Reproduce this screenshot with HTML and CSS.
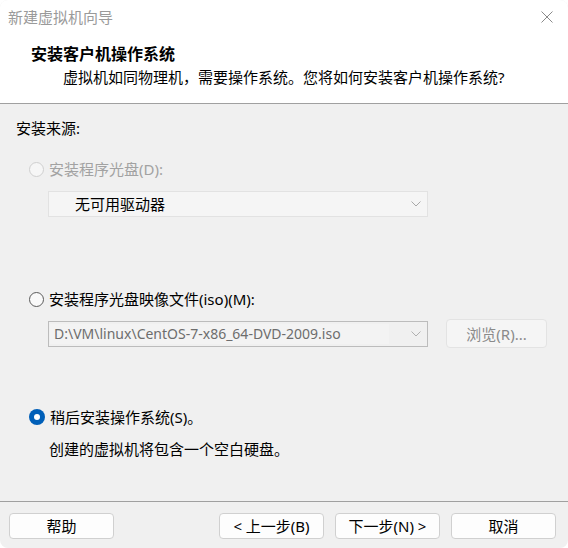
FILE: index.html
```html
<!DOCTYPE html>
<html lang="zh-CN">
<head>
<meta charset="utf-8">
<title>新建虚拟机向导</title>
<link rel="stylesheet" href="styles.css">
</head>
<body>
<div class="window">
  <div class="top">
    <div class="titlebar">
      <span class="title">新建虚拟机向导</span>
      <svg class="close" width="12" height="12" viewBox="0 0 12 12"><path d="M0.5 0.5 L11.5 11.5 M11.5 0.5 L0.5 11.5" stroke="#8a8a8a" stroke-width="1" fill="none"/></svg>
    </div>
    <div class="header">
      <div class="heading">安装客户机操作系统</div>
      <div class="subtitle">虚拟机如同物理机，需要操作系统。您将如何安装客户机操作系统?</div>
    </div>
  </div>
  <div class="content">
    <div class="section-label">安装来源:</div>

    <div class="radio-row disabled first">
      <span class="radio radio-disabled"></span>
      <span class="label">安装程序光盘(D):</span>
    </div>
    <div class="combo combo-disabled">
      <span class="combo-text">无可用驱动器</span>
      <svg class="chev" width="10" height="6" viewBox="0 0 10 6"><path d="M0.5 0.5 L5 5 L9.5 0.5" stroke="#a8a8a8" stroke-width="1" fill="none"/></svg>
    </div>

    <div class="radio-row second">
      <span class="radio radio-off"></span>
      <span class="label">安装程序光盘映像文件(iso)(M):</span>
    </div>
    <div class="iso-row">
      <div class="combo combo-iso">
        <span class="combo-field">D:\VM\linux\CentOS-7-x86_64-DVD-2009.iso</span>
        <svg class="chev" width="10" height="6" viewBox="0 0 10 6"><path d="M0.5 0.5 L5 5 L9.5 0.5" stroke="#b0b0b0" stroke-width="1" fill="none"/></svg>
      </div>
      <div class="browse">浏览(R)...</div>
    </div>

    <div class="radio-row third">
      <span class="radio radio-on"></span>
      <span class="label">稍后安装操作系统(S)。</span>
    </div>
    <div class="desc">创建的虚拟机将包含一个空白硬盘。</div>
  </div>
  <div class="footer">
    <div class="btn">帮助</div>
    <div class="spacer"></div>
    <div class="btn">&lt; 上一步(B)</div>
    <div class="btn">下一步(N) &gt;</div>
    <div class="btn">取消</div>
  </div>
</div>
</body>
</html>
```
FILE: styles.css
```css
html, body {
  margin: 0;
  padding: 0;
  background: #ffffff;
}
body {
  font-family: "Noto Sans", "Noto Sans CJK SC", sans-serif;
  font-size: 15px;
  color: #000;
}
.window {
  width: 568px;
  height: 548px;
  display: flex;
  flex-direction: column;
  border-radius: 8px;
  overflow: hidden;
  background: #f0f0f0;
}
.top {
  background: #fff;
  border-bottom: 1px solid #a0a0a0;
  height: 103px;
}
.titlebar {
  height: 34px;
  display: flex;
  align-items: center;
  justify-content: space-between;
  padding: 0 15px 0 8px;
}
.title {
  color: #9a9a9a;
  line-height: 20px;
}
.close {
  display: block;
}
.header {
  padding: 10px 0 0 31px;
}
.heading {
  font-weight: bold;
  font-size: 16px;
  line-height: 20px;
}
.subtitle {
  line-height: 20px;
  margin-top: 3px;
  padding-left: 32px;
}
.content {
  flex: 1;
  padding: 14px 0 0 16px;
}
.section-label {
  line-height: 20px;
}
.radio-row {
  display: flex;
  align-items: center;
  margin-left: 13px;
  line-height: 20px;
}
.radio-row.first { margin-top: 21px; }
.radio-row.second { margin-top: 72px; }
.radio-row.third { margin-top: 59px; }
.radio-row .label {
  margin-left: 5px;
}
.disabled .label {
  color: #a2a2a2;
}
.radio {
  width: 15px;
  height: 15px;
  border-radius: 50%;
  box-sizing: border-box;
  flex: none;
}
.radio-disabled {
  border: 1px solid #cfcfcf;
  background: #f6f6f6;
}
.radio-off {
  border: 1px solid #5a5a5a;
  background: #f9f9f9;
}
.radio-on {
  background: #005fb8;
  position: relative;
  width: 16px;
  height: 16px;
}
.radio-on::after {
  content: "";
  position: absolute;
  left: 5px;
  top: 5px;
  width: 6px;
  height: 6px;
  border-radius: 50%;
  background: #fff;
}
.combo {
  box-sizing: border-box;
  width: 380px;
  height: 26px;
  margin-left: 32px;
  display: flex;
  align-items: center;
  justify-content: space-between;
}
.combo-disabled {
  margin-top: 12px;
  background: #f5f5f5;
  border: 1px solid #e2e2e2;
  padding: 0 6px 0 26px;
}
.combo-text {
  line-height: 20px;
}
.iso-row {
  display: flex;
  align-items: center;
  margin-top: 10px;
}
.combo-iso {
  background: #f0f0f0;
  border: 1px solid #bcbcbc;
  padding: 0 6px 0 1px;
}
.combo-field {
  flex: 1;
  align-self: stretch;
  margin: 2px 22px 2px 0;
  padding-left: 4px;
  background: #f3f3f3;
  color: #6d6d6d;
  font-size: 14px;
  line-height: 20px;
  white-space: nowrap;
}
.browse {
  box-sizing: border-box;
  width: 101px;
  height: 29px;
  margin-left: 18px;
  border: 1px solid #e3e3e3;
  border-radius: 4px;
  background: #f5f5f5;
  color: #8a8a8a;
  display: flex;
  align-items: center;
  justify-content: center;
}
.desc {
  margin-top: 12px;
  margin-left: 33px;
  line-height: 20px;
}
.footer {
  height: 47px;
  border-top: 1px solid #a0a0a0;
  display: flex;
  align-items: flex-start;
  padding: 11px 12px 0 9px;
  gap: 11px;
  box-sizing: border-box;
}
.spacer {
  flex: 1;
}
.btn {
  box-sizing: border-box;
  width: 105px;
  height: 26px;
  border: 1px solid #d0d0d0;
  border-radius: 4px;
  background: #fdfdfd;
  display: flex;
  align-items: center;
  justify-content: center;
  line-height: 20px;
}
```
